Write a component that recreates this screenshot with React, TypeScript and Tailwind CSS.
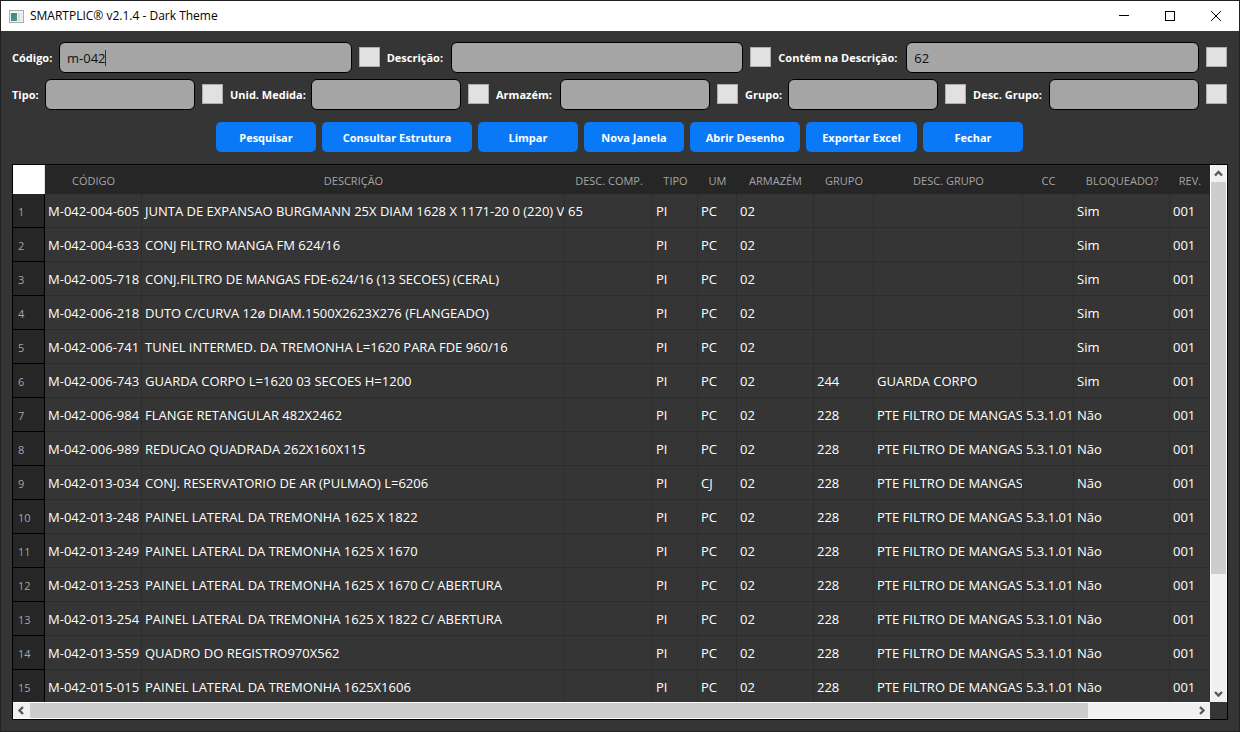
import React from "react";

const UI = "font-['Open_Sans','Noto_Sans',sans-serif]";

type Field = { id: string; label: string; labelWidth: string; value?: string; caret?: boolean };

const firstRow: Field[] = [
  { id: "codigo", label: "Código:", labelWidth: "w-[47px]", value: "m-042", caret: true },
  { id: "descricao", label: "Descrição:", labelWidth: "w-16" },
  { id: "contem", label: "Contém na Descrição:", labelWidth: "w-32", value: "62" },
];

const secondRow: Field[] = [
  { id: "tipo", label: "Tipo:", labelWidth: "w-[33px]" },
  { id: "unidade", label: "Unid. Medida:", labelWidth: "w-[81px]" },
  { id: "armazem", label: "Armazém:", labelWidth: "w-16" },
  { id: "grupo", label: "Grupo:", labelWidth: "w-[43px]" },
  { id: "desc-grupo", label: "Desc. Grupo:", labelWidth: "w-[76px]" },
];

const actions = [
  { label: "Pesquisar", width: "w-[100px]" },
  { label: "Consultar Estrutura", width: "w-[150px]" },
  { label: "Limpar", width: "w-[100px]" },
  { label: "Nova Janela", width: "w-[100px]" },
  { label: "Abrir Desenho", width: "w-[110px]" },
  { label: "Exportar Excel", width: "w-[111px]" },
  { label: "Fechar", width: "w-[100px]" },
];

const columns = [
  { label: "CÓDIGO", width: "w-[97px]" },
  { label: "DESCRIÇÃO", width: "" },
  { label: "DESC. COMP.", width: "w-[88px]" },
  { label: "TIPO", width: "w-[45px]" },
  { label: "UM", width: "w-[39px]" },
  { label: "ARMAZÉM", width: "w-[77px]" },
  { label: "GRUPO", width: "w-[60px]" },
  { label: "DESC. GRUPO", width: "w-[149px]" },
  { label: "CC", width: "w-[51px]" },
  { label: "BLOQUEADO?", width: "w-[96px]" },
  { label: "REV.", width: "w-[40px]" },
];

const PTE = "PTE FILTRO DE MANGAS";
const CC = "5.3.1.01";

const rows: string[][] = [
  ["M-042-004-605", "JUNTA DE EXPANSAO BURGMANN 25X DIAM 1628 X 1171-20 0 (220) V", "65", "PI", "PC", "02", "", "", "", "Sim", "001"],
  ["M-042-004-633", "CONJ FILTRO MANGA FM 624/16", "", "PI", "PC", "02", "", "", "", "Sim", "001"],
  ["M-042-005-718", "CONJ.FILTRO DE MANGAS FDE-624/16 (13 SECOES) (CERAL)", "", "PI", "PC", "02", "", "", "", "Sim", "001"],
  ["M-042-006-218", "DUTO C/CURVA 12ø DIAM.1500X2623X276 (FLANGEADO)", "", "PI", "PC", "02", "", "", "", "Sim", "001"],
  ["M-042-006-741", "TUNEL INTERMED. DA TREMONHA L=1620 PARA FDE 960/16", "", "PI", "PC", "02", "", "", "", "Sim", "001"],
  ["M-042-006-743", "GUARDA CORPO L=1620 03 SECOES H=1200", "", "PI", "PC", "02", "244", "GUARDA CORPO", "", "Sim", "001"],
  ["M-042-006-984", "FLANGE RETANGULAR 482X2462", "", "PI", "PC", "02", "228", PTE, CC, "Não", "001"],
  ["M-042-006-989", "REDUCAO QUADRADA 262X160X115", "", "PI", "PC", "02", "228", PTE, CC, "Não", "001"],
  ["M-042-013-034", "CONJ. RESERVATORIO DE AR (PULMAO) L=6206", "", "PI", "CJ", "02", "228", PTE, "", "Não", "001"],
  ["M-042-013-248", "PAINEL LATERAL DA TREMONHA 1625 X 1822", "", "PI", "PC", "02", "228", PTE, CC, "Não", "001"],
  ["M-042-013-249", "PAINEL LATERAL DA TREMONHA 1625 X 1670", "", "PI", "PC", "02", "228", PTE, CC, "Não", "001"],
  ["M-042-013-253", "PAINEL LATERAL DA TREMONHA 1625 X 1670 C/ ABERTURA", "", "PI", "PC", "02", "228", PTE, CC, "Não", "001"],
  ["M-042-013-254", "PAINEL LATERAL DA TREMONHA 1625 X 1822 C/ ABERTURA", "", "PI", "PC", "02", "228", PTE, CC, "Não", "001"],
  ["M-042-013-559", "QUADRO DO REGISTRO970X562", "", "PI", "PC", "02", "228", PTE, CC, "Não", "001"],
  ["M-042-015-015", "PAINEL LATERAL DA TREMONHA 1625X1606", "", "PI", "PC", "02", "228", PTE, CC, "Não", "001"],
];

function AppIcon() {
  return (
    <svg width="15" height="13" viewBox="0 0 15 13" shapeRendering="crispEdges" aria-hidden="true">
      <defs>
        <linearGradient id="app-pane" x1="0" y1="0" x2="1" y2="1">
          <stop offset="0" stopColor="#3f7fa0" />
          <stop offset="1" stopColor="#4d9c72" />
        </linearGradient>
      </defs>
      <rect x="0.5" y="0.5" width="14" height="12" fill="#f4f4f4" stroke="#a9adb0" />
      <rect x="2" y="3" width="6" height="8" fill="url(#app-pane)" />
      <rect x="9" y="3" width="2" height="8" fill="#d5dadb" />
      <rect x="12" y="3" width="1" height="8" fill="#dfe3e4" />
    </svg>
  );
}

function TitleBar() {
  return (
    <header className="flex h-[30px] shrink-0 items-center bg-white pl-2 text-black">
      <AppIcon />
      <h1 className="flex-1 pl-1.5 text-[12px] leading-4">SMARTPLIC® v2.1.4 - Dark Theme</h1>
      <button type="button" aria-label="Minimizar" className="flex h-full w-[46px] items-center justify-center">
        <svg width="10" height="10" viewBox="0 0 10 10" shapeRendering="crispEdges"><path d="M0 4.5H10" stroke="#000" /></svg>
      </button>
      <button type="button" aria-label="Maximizar" className="flex h-full w-[46px] items-center justify-center">
        <svg width="10" height="10" viewBox="0 0 10 10" shapeRendering="crispEdges"><rect x="0.5" y="0.5" width="9" height="9" fill="none" stroke="#000" /></svg>
      </button>
      <button type="button" aria-label="Fechar janela" className="flex h-full w-[46px] items-center justify-center">
        <svg width="10" height="10" viewBox="0 0 10 10"><path d="M0 0L10 10M10 0L0 10" stroke="#000" /></svg>
      </button>
    </header>
  );
}

function FieldRow({ fields }: { fields: Field[] }) {
  return (
    <div className="flex gap-[7px]">
      {fields.map((f) => (
        <div key={f.id} className="flex flex-auto items-center">
          <label htmlFor={f.id} className={`${f.labelWidth} shrink-0 whitespace-nowrap text-[11px] font-bold leading-4`}>
            {f.label}
          </label>
          <div className="relative min-w-0 flex-1">
            <input
              id={f.id}
              type="text"
              size={1}
              defaultValue={f.value}
              className="block h-[31px] w-full rounded-md border border-black bg-[#a5a5a5] px-[7px] text-[13px] text-[#111] outline-none"
            />
            {f.caret && <span className="absolute left-[46px] top-2 h-4 w-px bg-[#333]" />}
          </div>
          <button
            type="button"
            aria-label={`Limpar ${f.label}`}
            className="mb-px ml-[7px] h-5 w-[21px] shrink-0 border border-[#adadad] bg-[#e1e1e1]"
          />
        </div>
      ))}
    </div>
  );
}

const arrows = {
  up: "M1 6.5L4.5 3L8 6.5",
  down: "M1 3L4.5 6.5L8 3",
  left: "M6 1L2.5 4.5L6 8",
  right: "M3 1L6.5 4.5L3 8",
};

function ScrollArrow({ direction, label }: { direction: keyof typeof arrows; label: string }) {
  const size = direction === "up" || direction === "down" ? "h-[17px] w-full" : "h-full w-[17px]";
  return (
    <button type="button" aria-label={label} className={`${size} flex shrink-0 items-center justify-center bg-[#f0f0f0]`}>
      <svg width="9" height="9" viewBox="0 0 9 9"><path d={arrows[direction]} fill="none" stroke="#585858" strokeWidth="2.4" /></svg>
    </button>
  );
}

function ResultsTable() {
  return (
    <table className="w-full table-fixed border-separate border-spacing-0 text-[13px]">
      <colgroup>
        <col className="w-8" />
        {columns.map((c) => <col key={c.label} className={c.width} />)}
      </colgroup>
      <thead>
        <tr className="h-[29px] bg-[#262626] text-[11px] text-[#a5a5a5]">
          <th className="border-r border-[#e0e0e0] bg-white" aria-label="Selecionar tudo" />
          {columns.map((c) => (
            <th key={c.label} className="whitespace-nowrap border-t border-[#303030] p-0 pt-[3px] font-normal">{c.label}</th>
          ))}
        </tr>
      </thead>
      <tbody>
        {rows.map((row, i) => (
          <tr key={row[0]} className="h-[34px]">
            <th className="border-b border-r border-black bg-[#262626] p-0 pl-[5px] pt-1 text-left text-[11px] font-normal text-[#a5a5a5]">
              {i + 1}
            </th>
            {row.map((cell, j) => (
              <td key={j} className="overflow-hidden whitespace-nowrap border-b border-r border-[#2d2d2d] p-0 pl-[3px] pt-0.5">{cell}</td>
            ))}
          </tr>
        ))}
      </tbody>
    </table>
  );
}

export default function App() {
  return (
    <div className={`${UI} flex h-screen flex-col border border-[#232323] bg-[#353535] text-white`}>
      <TitleBar />
      <main className="flex min-h-0 flex-1 flex-col p-[11px]">
        <form className="flex flex-col gap-1.5 pr-px" onSubmit={(e) => e.preventDefault()}>
          <FieldRow fields={firstRow} />
          <FieldRow fields={secondRow} />
          <div className="flex justify-center gap-1.5 pt-1.5">
            {actions.map((a) => (
              <button
                key={a.label}
                type="button"
                className={`${a.width} h-[30px] whitespace-nowrap rounded-[5px] bg-[#0a79f8] pt-0.5 text-[11px] font-bold`}
              >
                {a.label}
              </button>
            ))}
          </div>
        </form>

        <section className="mt-3 flex min-h-0 flex-1 flex-col border border-black">
          <div className="flex min-h-0 flex-1">
            <div className="min-w-0 flex-1 overflow-hidden">
              <ResultsTable />
            </div>
            <div className="flex w-[17px] shrink-0 flex-col border-x border-white bg-[#f0f0f0]">
              <ScrollArrow direction="up" label="Rolar para cima" />
              <div className="min-h-0 flex-1"><div className="h-[78%] bg-[#cdcdcd]" /></div>
              <ScrollArrow direction="down" label="Rolar para baixo" />
            </div>
          </div>
          <div className="flex h-[17px] shrink-0">
            <div className="flex min-w-0 flex-1 items-stretch border-y border-white bg-[#f0f0f0]">
              <ScrollArrow direction="left" label="Rolar para a esquerda" />
              <div className="min-w-0 flex-1"><div className="h-full w-[91%] bg-[#cdcdcd]" /></div>
              <ScrollArrow direction="right" label="Rolar para a direita" />
            </div>
            <div className="w-[17px] shrink-0" />
          </div>
        </section>
      </main>
    </div>
  );
}
